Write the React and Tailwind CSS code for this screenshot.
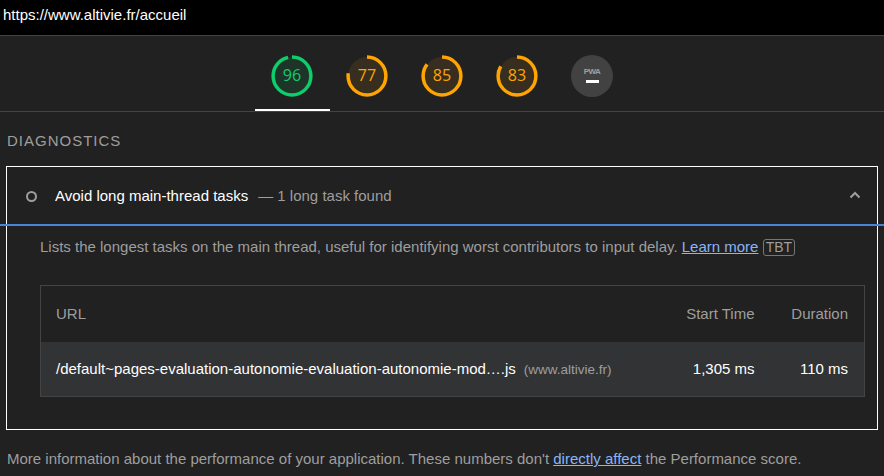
import { useState } from 'react';

const gauges = [
  { score: 96, color: '#0cce6b', fill: '#1e3429' },
  { score: 77, color: '#ffa400', fill: '#372e1f' },
  { score: 85, color: '#ffa400', fill: '#372e1f' },
  { score: 83, color: '#ffa400', fill: '#372e1f' },
];

function Gauge({ score, color, fill }) {
  const r = 54;
  const c = 2 * Math.PI * r;
  return (
    <svg viewBox="0 0 120 120" className="w-[42px] h-[42px]">
      <circle cx="60" cy="60" r={r} fill={fill} />
      <circle
        cx="60"
        cy="60"
        r={r}
        fill="none"
        stroke={color}
        strokeWidth="10"
        strokeDasharray={`${(c * score) / 100} ${c}`}
        transform="rotate(-90 60 60)"
      />
      <text
        x="60"
        y="62"
        textAnchor="middle"
        dominantBaseline="middle"
        fill={color}
        fontSize="46"
        fontFamily="'Open Sans', sans-serif"
      >
        {score}
      </text>
    </svg>
  );
}

function PwaBadge() {
  return (
    <div className="w-[42px] h-[42px] rounded-full bg-[#424242] flex flex-col items-center justify-center gap-[4px] pb-[2px]">
      <span className="text-[8px] leading-none font-bold text-[#a0a0a0] tracking-[-0.5px]">PWA</span>
      <span className="block w-[13px] h-[3px] bg-white" />
    </div>
  );
}

export default function App() {
  const [active] = useState(0);

  return (
    <div className="w-[884px] h-[476px] overflow-hidden bg-[#212121] font-['Liberation_Sans',Arial,sans-serif] text-[15px]">
      {/* url bar */}
      <div className="h-[36px] bg-black border-b border-[#444] flex items-center px-[3px] pb-[4px] text-white">
        https://www.altivie.fr/accueil
      </div>

      {/* gauges */}
      <div className="border-b border-[#444] flex justify-center">
        {[...gauges.map((g) => <Gauge key={g.score} {...g} />), <PwaBadge key="pwa" />].map(
          (node, idx) => (
            <div
              key={idx}
              className={
                'w-[75px] h-[75px] flex items-start justify-center pt-[19px] ' +
                (idx === active ? 'shadow-[inset_0_-2px_0_#ffffff]' : '')
              }
            >
              {node}
            </div>
          )
        )}
      </div>

      <div className="px-[6px]">
        <div className="pt-[20px] pb-[17px] pl-[1px] leading-[17px] tracking-[1px] text-[#9e9e9e]">
          DIAGNOSTICS
        </div>

        {/* audit */}
        <div className="border border-white h-[264px]">
          <div className="h-[58px] flex items-center pl-[19px] pr-[16px]">
            <span className="w-[11px] h-[11px] rounded-full border-2 border-[#9e9e9e] mr-[18px]" />
            <span className="text-white">Avoid long main-thread tasks</span>
            <span className="text-[#9e9e9e] ml-[10px]">— 1 long task found</span>
            <svg viewBox="0 0 12 8" className="w-[12px] h-[8px] ml-auto mt-[-2px]" fill="none">
              <path d="M1.5 6.5 6 2l4.5 4.5" stroke="#9e9e9e" strokeWidth="2" />
            </svg>
          </div>
          <div className="h-[2px] bg-[#4a84d4] -mx-[7px] -mt-px mb-px" />

          <div className="ml-[33px] mr-[12px]">
            <p className="pt-[11px] text-[#9e9e9e] leading-[18px]">
              Lists the longest tasks on the main thread, useful for identifying worst contributors
              to input delay.{' '}
              <span className="text-[#8ab4f8] underline">Learn more</span>{' '}
              <span className="inline-block border border-[#777] rounded-[3px] px-[2px] text-[14px] leading-[15px] text-[#9e9e9e]">
                TBT
              </span>
            </p>

            <table className="mt-[29px] w-full border border-[#444] border-collapse">
              <thead>
                <tr className="h-[56px] text-[#9e9e9e]">
                  <th className="text-left font-normal pl-[15px]">URL</th>
                  <th className="w-[116px] text-right font-normal pr-[16px]">Start Time</th>
                  <th className="w-[94px] text-right font-normal pr-[16px]">Duration</th>
                </tr>
              </thead>
              <tbody>
                <tr className="h-[55px] bg-[#323335] text-white">
                  <td className="pl-[15px] whitespace-nowrap">
                    /default~pages-evaluation-autonomie-evaluation-autonomie-mod….js
                    <span className="ml-[8px] text-[13.5px] text-[#9e9e9e]">(www.altivie.fr)</span>
                  </td>
                  <td className="text-right pr-[16px] whitespace-nowrap">1,305 ms</td>
                  <td className="text-right pr-[16px] whitespace-nowrap">110 ms</td>
                </tr>
              </tbody>
            </table>
          </div>
        </div>

        <p className="pt-[18px] pl-[1px] text-[#9e9e9e]">
          More information about the performance of your application. These numbers don't{' '}
          <span className="text-[#8ab4f8] underline">directly affect</span> the Performance score.
        </p>
      </div>
    </div>
  );
}
